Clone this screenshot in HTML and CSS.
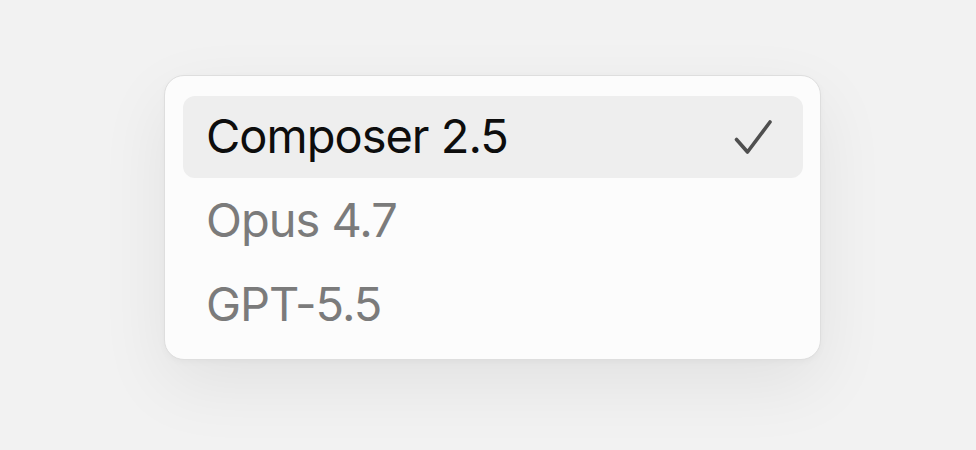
FILE: index.html
```html
<!DOCTYPE html>
<html lang="en">
<head>
<meta charset="utf-8">
<title>Model picker</title>
<link rel="stylesheet" href="styles.css">
</head>
<body>
  <div class="menu" role="listbox">
    <div class="item selected" role="option" aria-selected="true">
      <span class="label">Composer 2.5</span>
      <svg class="check" width="40" height="38" viewBox="0 0 40 38" aria-hidden="true">
        <path d="M3.5 20.5 L14.5 33 L37 3" fill="none" stroke="#4f4f4f" stroke-width="3.6" stroke-linecap="round" stroke-linejoin="round"/>
      </svg>
    </div>
    <div class="item" role="option"><span class="label">Opus 4.7</span></div>
    <div class="item" role="option"><span class="label">GPT-5.5</span></div>
  </div>
</body>
</html>
```

FILE: styles.css
```css
html, body {
  margin: 0;
  height: 100%;
}
body {
  background: #f2f2f2;
  font-family: Inter, "Liberation Sans", Arial, sans-serif;
  padding: 75px 0 0 164px;
  box-sizing: border-box;
}
.menu {
  width: 657px;
  box-sizing: border-box;
  background: #fcfcfc;
  border: 1px solid #dedede;
  border-radius: 20px;
  padding: 20px 17px 13px 18px;
  display: flex;
  flex-direction: column;
  gap: 2px;
  box-shadow: 0 24px 70px rgba(0, 0, 0, 0.07), 0 2px 6px rgba(0, 0, 0, 0.03);
}
.item {
  height: 82px;
  box-sizing: border-box;
  border-radius: 12px;
  padding: 0 30px 2px 23px;
  display: flex;
  align-items: center;
  justify-content: space-between;
}
.label {
  font-size: 47px;
  line-height: 80px;
  color: #7b7b7b;
  letter-spacing: -1px;
}
.selected {
  background: #eeeeee;
}
.selected .label {
  color: #0d0d0d;
}
.check {
  display: block;
  margin-top: 3px;
}
```
